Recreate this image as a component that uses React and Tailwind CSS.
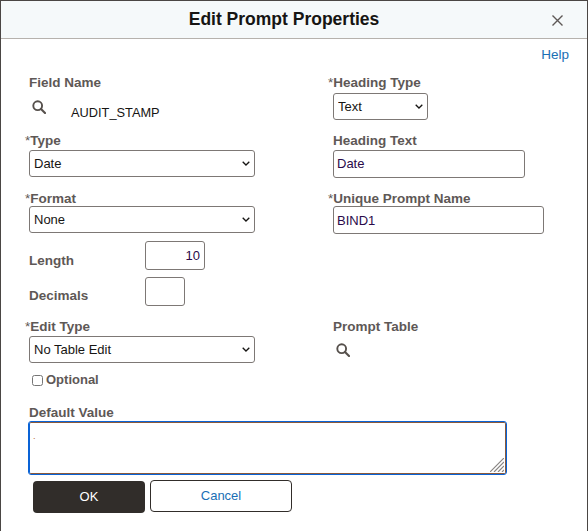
import React from 'react';

function SearchIcon() {
  return (
    <svg width="14" height="14" viewBox="0 0 14 14" fill="none" stroke="#56504c" className="block">
      <circle cx="5.7" cy="5.7" r="4.4" strokeWidth="1.9" />
      <path d="M9 9l4 4" strokeWidth="2.2" strokeLinecap="round" />
    </svg>
  );
}

function Label({ children, required, className = '' }) {
  return (
    <label className={`block text-[13.5px] leading-[16px] font-bold text-[#5e5856] ${required ? '-ml-[4px]' : ''} ${className}`}>
      {required && <span className="font-normal">*</span>}
      {children}
    </label>
  );
}

function Select({ value, options, className = '' }) {
  return (
    <div className={`relative h-[27px] ${className}`}>
      <select
        defaultValue={value}
        className="block w-full h-full appearance-none pl-[4px] text-[13px] text-[#161513] bg-white border border-[#7d7875] rounded-[3px]"
      >
        {options.map((o) => (
          <option key={o}>{o}</option>
        ))}
      </select>
      <svg width="8" height="5" viewBox="0 0 8 5" fill="none" stroke="#161513" strokeWidth="1.3" className="absolute right-[5px] top-[11px] pointer-events-none">
        <path d="M0.7 0.7L4 4l3.3-3.3" />
      </svg>
    </div>
  );
}

function TextInput({ value, className = '' }) {
  return (
    <input
      type="text"
      defaultValue={value}
      className={`block pl-[3px] pr-[4px] text-[13px] text-[#2a0a4a] bg-white border border-[#7d7875] rounded-[3px] ${className}`}
    />
  );
}

export default function App() {
  return (
    <div className="w-[588px] h-[531px] bg-white border-l border-r border-t border-[#4a4644] overflow-hidden font-['Liberation_Sans',Arial,sans-serif]">
      {/* title bar */}
      <div className="relative h-[38px] bg-[#f5f9fa] border-b border-[#b6b2ad] flex items-center justify-center pr-[20px]">
        <h1 className="text-[17.5px] font-bold text-[#161513]">Edit Prompt Properties</h1>
        <button className="absolute right-[24px] top-[14px] text-[#5e5856]">
          <svg width="11" height="11" viewBox="0 0 11 11" stroke="currentColor" strokeWidth="1.4" className="block">
            <path d="M0.5 0.5l10 10M10.5 0.5l-10 10" />
          </svg>
        </button>
      </div>

      <div className="flex justify-end pr-[18px] pt-[8px] h-[28px]">
        <a className="text-[13.5px] leading-[16px] text-[#1a6fb5]">Help</a>
      </div>

      <div className="grid grid-cols-[304px_1fr] pl-[28px]">
        {/* left column */}
        <div>
          <Label className="mt-[8px]">Field Name</Label>
          <div className="flex mt-[9px] h-[31px]">
            <div className="ml-[3px] w-[39px]"><SearchIcon /></div>
            <span className="text-[12.8px] leading-[16px] mt-[5px] text-[#161513]">AUDIT_STAMP</span>
          </div>
          <Label required className="mt-[2px]">Type</Label>
          <Select value="Date" options={['Date']} className="w-[226px] mt-[1px]" />
          <Label required className="mt-[14px]">Format</Label>
          <Select value="None" options={['None']} className="w-[226px] -mt-[1px]" />
          <div className="flex mt-[8px]">
            <Label className="w-[116px] mt-[12px]">Length</Label>
            <TextInput value="10" className="w-[60px] h-[29px] text-right" />
          </div>
          <div className="flex mt-[7px]">
            <Label className="w-[116px] mt-[11px]">Decimals</Label>
            <TextInput value="" className="w-[40px] h-[29px]" />
          </div>
          <Label required className="mt-[13px]">Edit Type</Label>
          <Select value="No Table Edit" options={['No Table Edit']} className="w-[226px] mt-[1px]" />
          <div className="flex items-center mt-[9px] ml-[3px] gap-[3px]">
            <input type="checkbox" className="w-[11px] h-[11px] m-0" />
            <Label className="text-[13px]">Optional</Label>
          </div>
        </div>

        {/* right column */}
        <div>
          <Label required className="mt-[8px] -ml-[5px]">Heading Type</Label>
          <Select value="Text" options={['Text']} className="w-[95px] mt-[2px]" />
          <Label className="mt-[13px]">Heading Text</Label>
          <TextInput value="Date" className="w-[192px] h-[28px] mt-[1px] pb-[2px]" />
          <Label required className="mt-[13px] -ml-[5px]">Unique Prompt Name</Label>
          <TextInput value="BIND1" className="w-[211px] h-[28px] -mt-[1px]" />
          <Label className="mt-[85px]">Prompt Table</Label>
          <div className="mt-[8px] ml-[3px]"><SearchIcon /></div>
        </div>
      </div>

      <div className="pl-[28px]">
        <Label className="mt-[17px]">Default Value</Label>
        <div className="relative w-[477px] h-[52px] mt-[1px]">
          <textarea
            defaultValue="."
            className="block w-full h-full pl-[3px] pt-[7px] text-[9px] text-[#b8651b] bg-white border border-[#8a5a3c] border-l-[#0a63d6] rounded-[2px] outline-1 outline-[#0a63d6] resize-none"
          />
          <svg width="14" height="14" viewBox="0 0 14 14" stroke="#8a8684" strokeWidth="1.2" className="absolute right-[2px] bottom-[2px] pointer-events-none">
            <path d="M0 14L14 0M4 14L14 4M8 14l6-6M12 14l2-2" />
          </svg>
        </div>
        <div className="flex items-start gap-[5px] mt-[6px] ml-[4px]">
          <button className="w-[112px] h-[32px] mt-[1px] bg-[#312d2a] rounded-[4px] text-[13px] text-white">OK</button>
          <button className="w-[142px] h-[32px] bg-white border border-[#312d2a] rounded-[4px] text-[13px] text-[#1a6fb5]">Cancel</button>
        </div>
      </div>
    </div>
  );
}
